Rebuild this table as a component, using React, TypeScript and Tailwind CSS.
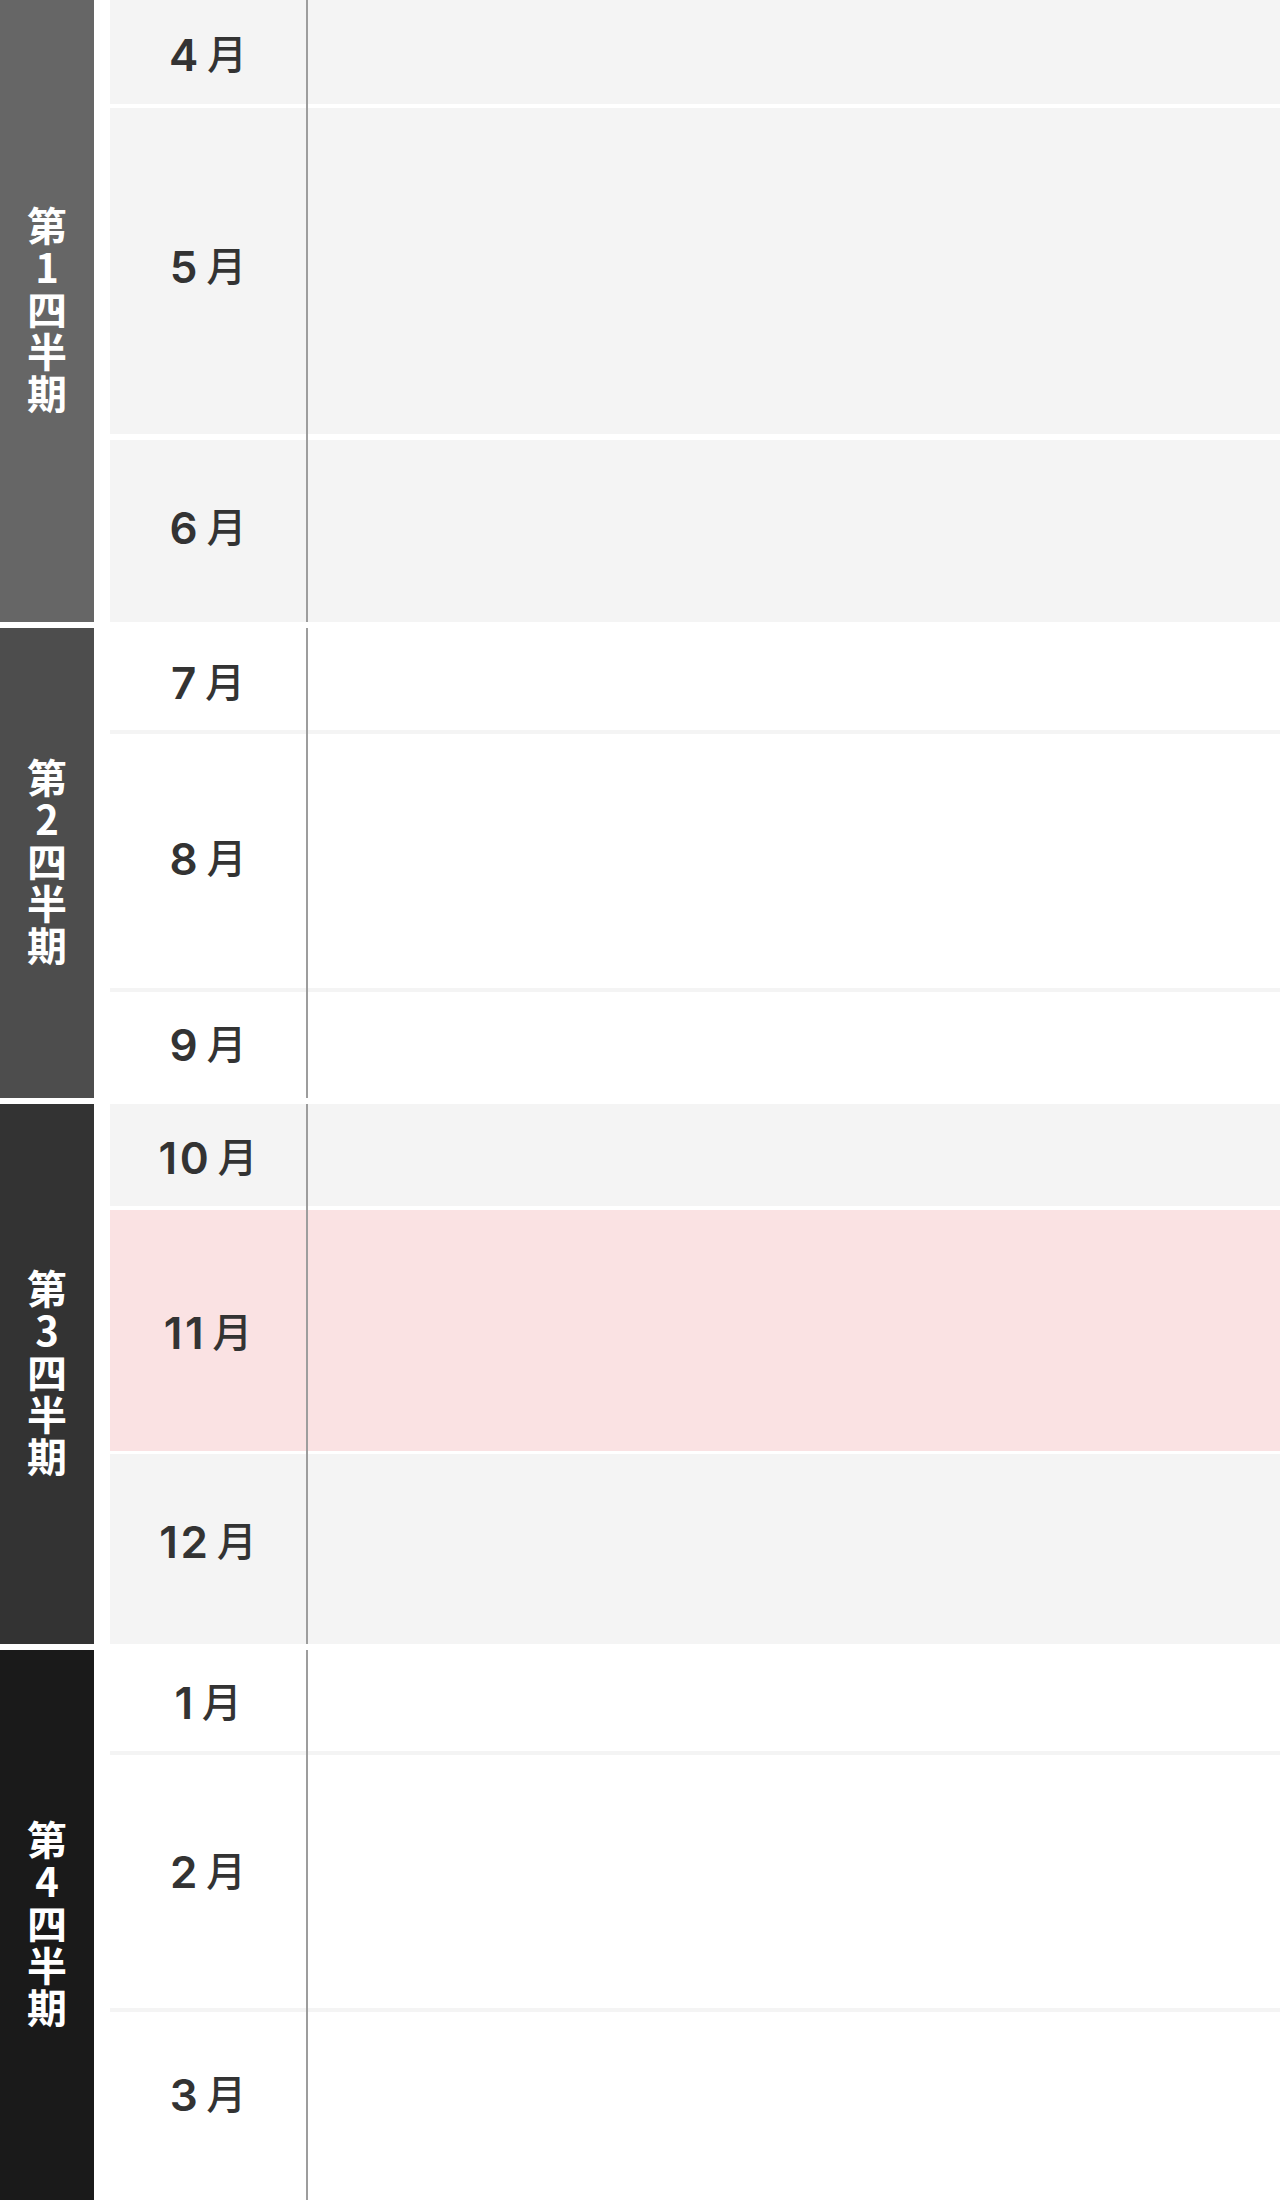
import React from "react";

type Row = { num: string; h: string; bg: string; pad: string };
type Quarter = {
  label: string;
  labelBg: string;
  rows: Row[];
  gaps: string[];
};

const quarters: Quarter[] = [
  {
    label: "第1四半期",
    labelBg: "bg-[#666666]",
    rows: [
      { num: "4", h: "h-[104px]", bg: "bg-[#f4f4f4]", pad: "pt-[6px]" },
      { num: "5", h: "h-[326px]", bg: "bg-[#f4f4f4]", pad: "pb-[8px]" },
      { num: "6", h: "h-[182px]", bg: "bg-[#f4f4f4]", pad: "pb-[7px]" },
    ],
    gaps: ["h-[4px] bg-white", "h-[6px] bg-white"],
  },
  {
    label: "第2四半期",
    labelBg: "bg-[#4d4d4d]",
    rows: [
      { num: "7", h: "h-[102px]", bg: "bg-white", pad: "pt-[7px]" },
      { num: "8", h: "h-[254px]", bg: "bg-white", pad: "pb-[4px]" },
      { num: "9", h: "h-[106px]", bg: "bg-white", pad: "pt-[0px]" },
    ],
    gaps: ["h-[4px] bg-[#f4f4f4]", "h-[4px] bg-[#f4f4f4]"],
  },
  {
    label: "第3四半期",
    labelBg: "bg-[#333333]",
    rows: [
      { num: "10", h: "h-[102px]", bg: "bg-[#f4f4f4]", pad: "pt-[6px]" },
      { num: "11", h: "h-[241px]", bg: "bg-[#fae2e3]", pad: "pt-[4px]" },
      { num: "12", h: "h-[190px]", bg: "bg-[#f4f4f4]", pad: "pb-[14px]" },
    ],
    gaps: ["h-[4px] bg-white", "h-[3px] bg-white"],
  },
  {
    label: "第4四半期",
    labelBg: "bg-[#1a1a1a]",
    rows: [
      { num: "1", h: "h-[101px]", bg: "bg-white", pad: "pt-[4px]" },
      { num: "2", h: "h-[253px]", bg: "bg-white", pad: "pb-[20px]" },
      { num: "3", h: "h-[188px]", bg: "bg-white", pad: "pb-[22px]" },
    ],
    gaps: ["h-[4px] bg-[#f4f4f4]", "h-[4px] bg-[#f4f4f4]"],
  },
];

function MonthLabel({ num }: { num: string }) {
  return (
    <div className="flex items-baseline text-[#333333]">
      <span className="font-['Inter',sans-serif] text-[44px] font-semibold leading-none tracking-[0.06em]">
        {num}
      </span>
      <span className="ml-[6px] font-['Noto_Sans_CJK_JP',sans-serif] text-[40px] font-medium leading-none relative -top-[2px]">
        月
      </span>
    </div>
  );
}

export default function App() {
  return (
    <div className="w-[1280px] bg-white font-['Noto_Sans_CJK_JP',sans-serif]">
      {quarters.map((q, qi) => (
        <div
          key={q.label}
          className={qi < quarters.length - 1 ? "flex mb-[6px]" : "flex"}
        >
          <div
            className={`w-[94px] shrink-0 flex items-center justify-center ${q.labelBg}`}
          >
            <span className="text-white text-[40px] font-bold leading-none tracking-[2px] [writing-mode:vertical-rl] [text-orientation:upright] font-['Noto_Sans_CJK_JP',sans-serif]">
              {q.label}
            </span>
          </div>
          <div className="ml-[16px] flex-1 relative flex flex-col">
            {q.rows.map((r, ri) => (
              <React.Fragment key={r.num}>
                <div className={`flex ${r.h} ${r.bg}`}>
                  <div
                    className={`w-[196px] shrink-0 flex items-center justify-center ${r.pad}`}
                  >
                    <MonthLabel num={r.num} />
                  </div>
                  <div className="flex-1" />
                </div>
                {ri < q.rows.length - 1 && <div className={q.gaps[ri]} />}
              </React.Fragment>
            ))}
            <div className="absolute left-[196px] top-0 bottom-0 w-[2px] bg-[#9d9d9d]" />
          </div>
        </div>
      ))}
    </div>
  );
}
